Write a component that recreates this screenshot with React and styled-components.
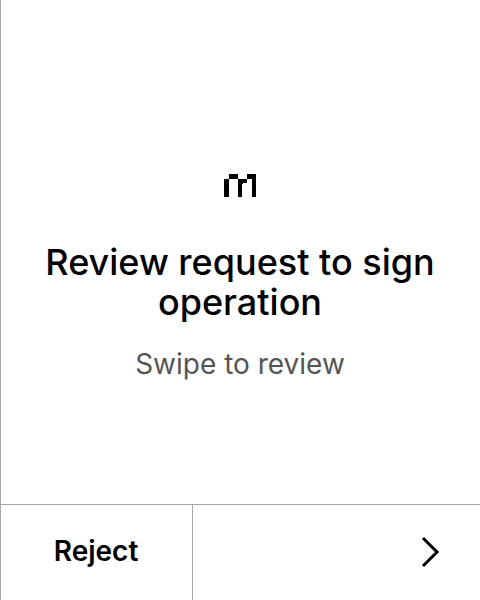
import React from 'react';
import styled, { createGlobalStyle } from 'styled-components';

const GlobalStyle = createGlobalStyle`
  * { box-sizing: border-box; }
  body { margin: 0; background: #fff; color: #000; font-family: Inter, sans-serif; }
`;

const line = '#a6a6a6';

const Screen = styled.main`
  min-height: 100vh;
  display: flex;
  flex-direction: column;
  box-shadow: inset 1px 0 ${line};
`;

const Content = styled.section`
  flex: 1;
  display: flex;
  flex-direction: column;
  align-items: center;
  justify-content: center;
  padding: 32px 40px 0;
  text-align: center;
`;

const Logo = styled.svg`
  width: 64px;
  height: 64px;
`;

const Title = styled.h1`
  margin: 24px 0 0;
  font-size: 36px;
  font-weight: 500;
  line-height: 40px;
`;

const Hint = styled.p`
  margin: 24px 0 0;
  font-size: 28px;
  line-height: 36px;
  color: #555;
`;

const Footer = styled.footer`
  display: grid;
  grid-template-columns: 2fr 3fr;
  height: 96px;
  border-top: 1px solid ${line};
`;

const FooterButton = styled.button`
  display: flex;
  align-items: center;
  justify-content: center;
  padding: 0 0 4px;
  border: 0;
  background: none;
  color: inherit;
  font: 600 28px/36px Inter, sans-serif;
  cursor: pointer;
`;

const NextButton = styled(FooterButton)`
  justify-content: flex-end;
  padding: 0 30px 2px 0;
  border-left: 1px solid ${line};
`;

export default function App() {
  return (
    <Screen>
      <GlobalStyle />
      <Content>
        <Logo viewBox="0 0 64 64" aria-hidden="true" shapeRendering="crispEdges">
          <path d="M16 25h5v18h-5zM21 20h9v5h-9zM30 25h9v4h-4v1h-1v13h-4zM34 29h1v1h-1zM39 20h9v23h-4v-18h-5z" />
        </Logo>
        <Title>Review request to sign operation</Title>
        <Hint>Swipe to review</Hint>
      </Content>
      <Footer>
        <FooterButton type="button">Reject</FooterButton>
        <NextButton type="button" aria-label="Next">
          <svg width="40" height="40" viewBox="0 0 40 40" fill="none" stroke="#000" strokeWidth="3">
            <path d="M13 6l14 14-14 14" />
          </svg>
        </NextButton>
      </Footer>
    </Screen>
  );
}
